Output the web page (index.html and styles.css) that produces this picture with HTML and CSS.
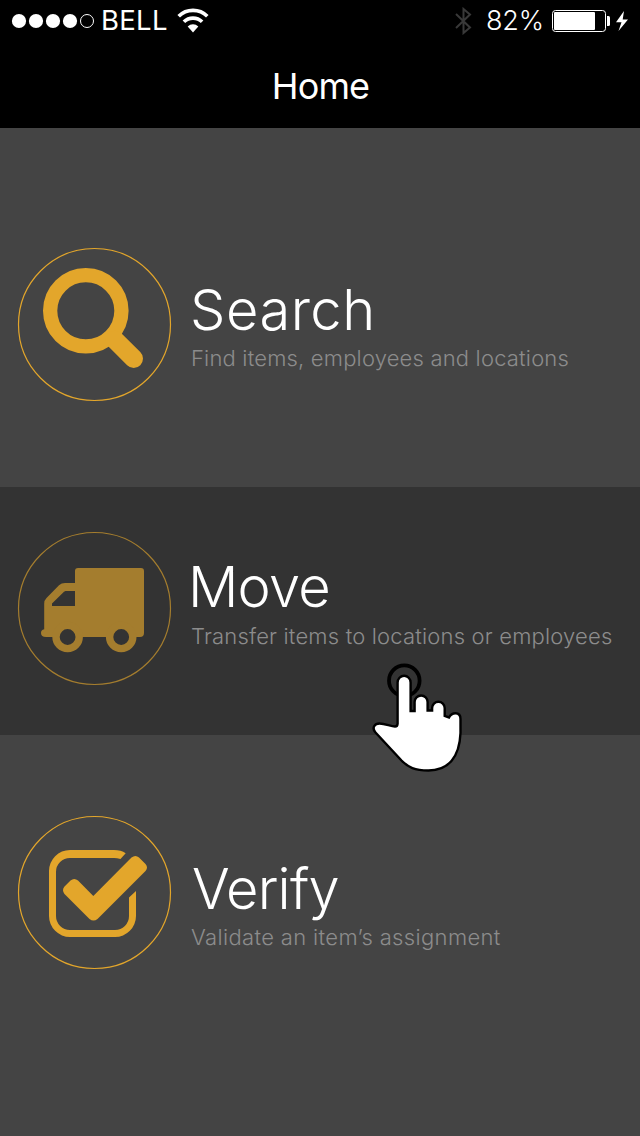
FILE: index.html
```html
<!DOCTYPE html>
<html lang="en">
<head>
<meta charset="utf-8">
<title>Home</title>
<link rel="stylesheet" href="styles.css">
</head>
<body>
<header class="top">
  <div class="status">
    <svg class="signal" width="84" height="16" viewBox="0 0 84 16">
      <g fill="#fff"><circle cx="8" cy="8" r="7.1"/><circle cx="25" cy="8" r="7.1"/><circle cx="42" cy="8" r="7.1"/><circle cx="59" cy="8" r="7.1"/></g>
      <circle cx="76" cy="8" r="6.5" fill="none" stroke="#fff"/>
    </svg>
    <span class="carrier">BELL</span>
    <svg class="wifi" width="32" height="26" viewBox="0 0 32 26">
      <g fill="none" stroke="#fff" stroke-width="3.6"><path d="M1.7 8.3a20.2 20.2 0 0 1 28.6 0"/><path d="M6.9 13.8a13 13 0 0 1 18.2 0"/></g>
      <path d="M10.7 18.4a7.6 7.6 0 0 1 10.6 0L16 24.4z" fill="#fff"/>
    </svg>
    <svg class="bluetooth" width="18" height="28" viewBox="0 0 18 28"><path d="M2 7l14 13.500-6.500 5.500V2l6.500 5.500L2 21" fill="none" stroke="#393939" stroke-width="2"/></svg>
    <span class="percent">82%</span>
    <svg class="battery" width="78" height="24" viewBox="0 0 78 24">
      <rect x="1.500" y="1.500" width="53" height="21" rx="3" fill="none" stroke="#fff"/>
      <rect x="3" y="3" width="41" height="18" rx="1" fill="#fff"/>
      <path d="M56 7h1.500q1.500 0 1.500 1.500v7q0 1.500-1.500 1.500H56z" fill="#fff"/>
      <path d="M73 2L65 13.300h5.500L67.500 22 77 10.500h-5.300z" fill="#fff"/>
    </svg>
  </div>
  <h1 class="title">Home</h1>
</header>
<main class="menu">
  <a class="row search">
    <svg class="icon" viewBox="0 0 170 170">
      <circle class="ring" cx="84.500" cy="84.500" r="76"/>
      <circle cx="75.800" cy="70.800" r="35.650" fill="none" stroke="currentColor" stroke-width="14.300"/>
      <path d="M105 100L123.700 118.600" stroke="currentColor" stroke-width="18.600" stroke-linecap="round"/>
    </svg>
    <span class="label"><span class="name">Search</span><span class="hint">Find items, employees and locations</span></span>
  </a>
  <a class="row move">
    <svg class="icon" viewBox="0 0 170 170">
      <circle class="ring" cx="84.500" cy="84.500" r="76"/>
      <path fill="currentColor" fill-rule="evenodd" d="M65 47q0-3 3-3h63q3 0 3 3v62q0 4-4 4H36q-5 0-5-4 0-3 3.200-3.700V79.500q0-3.200 2.300-5.500L49 61.300q2.500-2.300 6-2.300h10zM65 67h-9.500L54 67.700 42 79.500V82h23z"/>
      <g class="wheels"><circle cx="57.600" cy="113" r="11.600"/><circle cx="111.200" cy="113" r="11.600"/></g>
    </svg>
    <span class="label"><span class="name">Move</span><span class="hint">Transfer items to locations or employees</span></span>
    <svg class="pointer" width="120" height="130" viewBox="0 0 120 130">
      <circle cx="44.300" cy="30.700" r="15.300" fill="none" stroke="#000" stroke-width="3.800"/>
      <path d="M37.600 74V32.500a6.500 6.700 0 0 1 13 0V61h4V52a6.500 6.500 0 0 1 13 0v8.500h4.500V58a6.300 6.300 0 0 1 12.600 0v8l4.300 1.500c1.500-3 4-4.200 6.500-4.200 3.500 0 5 2.500 5 5.700v14c-1 24-12 37.500-32 37.500-14 0-20-3-27-10L15.500 82.500c-4-4.500-1-9 4-9 6 0 11 3 15.500 3q2.600 0 2.600-3z" fill="#fff" stroke="#000" stroke-width="2.400"/>
    </svg>
  </a>
  <a class="row verify">
    <svg class="icon" viewBox="0 0 170 170">
      <circle class="ring" cx="84.500" cy="84.500" r="76"/>
      <g fill="currentColor">
        <path d="M115.700 45.200Q111 42 104 42H60a21 21 0 0 0-21 21v45a21 21 0 0 0 21 21h45a21 21 0 0 0 21-21V83l-7 6.500V108a14 14 0 0 1-14 14H60a14 14 0 0 1-14-14V64a14 14 0 0 1 14-14h44q3 0 6.500 1z"/>
        <path d="M79.500 111l-25-25q-3-3.800 0-7.500l6-6q3.700-3 7.500 0L83.300 88l38.200-38.500q4-3.200 7.500 0l6.500 6.500q3 3.300 0 7l-48 48q-4 3.200-8 0z"/>
      </g>
    </svg>
    <span class="label"><span class="name">Verify</span><span class="hint">Validate an item’s assignment</span></span>
  </a>
</main>
</body>
</html>
```
FILE: styles.css
```css
* { box-sizing: border-box; }
body {
  margin: 0;
  width: 640px;
  height: 1136px;
  overflow: hidden;
  display: flex;
  flex-direction: column;
  background: #444;
  color: #fff;
  font-family: Inter, "Liberation Sans", sans-serif;
}
svg { display: block; flex: none; }
.top { height: 128px; background: #000; }
.status { height: 42px; display: flex; align-items: center; padding: 0 11px; }
.carrier { width: 76px; padding: 0 0 2px 6px; font-size: 27.5px; line-height: 40px; font-weight: 400; letter-spacing: 0.3px; }
.wifi { margin-left: 6px; }
.bluetooth { margin-left: auto; }
.percent { width: 66px; margin-left: 13px; padding-left: 1px; font-size: 27px; line-height: 40px; font-weight: 300; letter-spacing: -0.2px; }
.battery { flex: none; }
.title { margin: 0; padding-left: 1px; font-size: 36px; line-height: 88px; font-weight: 400; text-align: center; letter-spacing: -0.9px; }
.menu { flex: 1; display: flex; flex-direction: column; }
.row { position: relative; display: flex; align-items: flex-start; padding-left: 10px; color: #e3a62b; }
.search { height: 359px; padding-top: 112px; }
.move { height: 248px; padding-top: 37px; background: #333; color: #a47d2e; }
.verify { flex: 1; padding-top: 73px; }
.icon { width: 170px; height: 170px; }
.ring { fill: none; stroke: currentColor; stroke-width: 1.2; }
.wheels { fill: #333; stroke: currentColor; stroke-width: 7.4; }
.label { display: flex; flex-direction: column; padding: 35px 0 0 11px; white-space: nowrap; }
.move .label { padding-top: 28px; }
.verify .label { padding-top: 46px; }
.name { color: #fff; font-size: 56px; line-height: 70px; font-weight: 300; }
.search .name { margin-left: -1px; letter-spacing: 0.5px; }
.move .name { margin-left: -3px; letter-spacing: -0.8px; }
.verify .name { margin-left: 1px; letter-spacing: -0.8px; }
.hint { color: #8c8c8c; font-size: 22px; line-height: 28px; font-weight: 300; letter-spacing: 0.18px; }
.search .hint { margin-top: -1px; }
.verify .hint { margin-top: -1px; letter-spacing: 0.35px; }
.pointer { position: absolute; left: 360px; top: 163px; z-index: 1; }
```
